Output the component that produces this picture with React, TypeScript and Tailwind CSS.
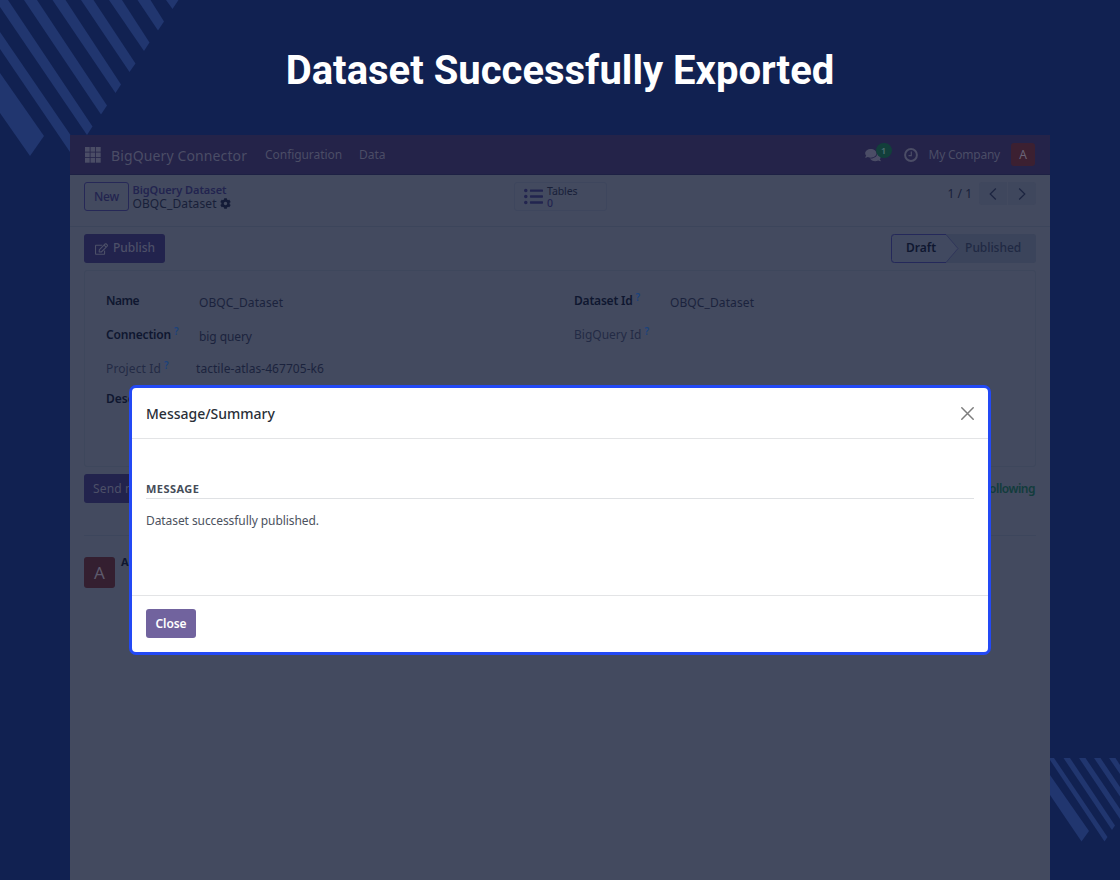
import type { ReactNode } from "react";
import { FaCog, FaComments, FaListUl, FaRegEdit } from "react-icons/fa";

function Stripes() {
  return (
    <svg className="pointer-events-none absolute inset-0 h-[880px] w-[1120px]" viewBox="0 0 1120 880" fill="#21366f">
      <path d="M0 73 44 136 30 156 0 113Z" />
      <path d="M0 32 76 143 70 152 0 49Z" />
      <path d="M0 0H8L92.5 126.5 87 135 0 7Z" />
      <path d="M24 0H37L107 105.5 101 114.5Z" />
      <path d="M52.5 0H65.5L121 84.5 115.5 93Z" />
      <path d="M81 0H93.5L135.5 63.5 129.5 72Z" />
      <path d="M109 0H122L149.5 42.5 144 51Z" />
      <path d="M137.5 0H150.5L164 21.5 158 30.5Z" />
      <path d="M166 0H178.5L172.5 9Z" />
      <path d="M1050 775 1089 831 1081.5 841.5 1050 795Z" />
      <path d="M1050 758H1054L1107.5 837 1104.5 841.5 1050 760Z" />
      <path d="M1063.5 758H1070L1115 825.5 1112 830Z" />
      <path d="M1079 758H1085.5L1120 809V819Z" />
      <path d="M1094 758H1100.5L1120 787V796.5Z" />
      <path d="M1109 758H1115.5L1120 765V774Z" />
    </svg>
  );
}

function AppsIcon() {
  return (
    <svg className="h-4 w-4" viewBox="0 0 16 16" fill="currentColor">
      {[0, 5.5, 11].map((y) => [0, 5.5, 11].map((x) => <rect key={`${x}-${y}`} x={x} y={y} width="4.7" height="4.7" />))}
    </svg>
  );
}

function ClockIcon() {
  return (
    <svg className="h-[14px] w-[14px]" viewBox="0 0 14 14" fill="none" stroke="currentColor">
      <circle cx="7" cy="7" r="5.9" strokeWidth="2" />
      <path d="M7.3 3.5V7.7H4.5" strokeWidth="1.2" />
    </svg>
  );
}

function Chevron({ d }: { d: string }) {
  return (
    <svg className="h-3 w-2" viewBox="0 0 8 12" fill="none" stroke="currentColor" strokeWidth="1.2">
      <path d={d} />
    </svg>
  );
}

function Label({ children, help, muted }: { children: ReactNode; help?: boolean; muted?: boolean }) {
  return (
    <div className={muted ? "flex text-[#232b45]" : "flex font-semibold text-[#0f1730]"}>
      {children}
      {help && <span className="-mt-[3px] ml-[3px] text-[10px] font-semibold leading-[16px] text-[#1b427c]">?</span>}
    </div>
  );
}

function NavBar() {
  return (
    <nav className="flex h-10 items-center border-b border-[#1d2044] bg-[#242349] pl-[15px] pr-[15px] text-[#4b4d66]">
      <AppsIcon />
      <span className="ml-[10px] pt-px text-[14px] tracking-[0.12px]">BigQuery Connector</span>
      <span className="ml-[18px] pt-px tracking-[-0.07px]">Configuration</span>
      <span className="ml-[17px] pt-px">Data</span>
      <div className="relative ml-auto mr-[16px] h-4 w-[23px]">
        <FaComments className="mt-px h-[14px] w-4" />
        <span className="absolute -top-[4px] left-[11px] flex h-[15px] w-4 items-center justify-center rounded-full bg-[#123f3b] text-[9px] font-semibold leading-none text-[#4f6f73]">1</span>
      </div>
      <ClockIcon />
      <span className="ml-[11px] pt-px tracking-[-0.24px]">My Company</span>
      <span className="ml-[11px] flex h-[23px] w-6 items-center justify-center rounded-[3px] bg-[#3c2031] text-[12px] text-[#6a6477]">A</span>
    </nav>
  );
}

function ControlPanel() {
  return (
    <div className="flex h-[52px] items-start border-b border-[#3c455b] px-[14px] pt-[7px]">
      <div className="flex h-[29px] w-[45px] items-center justify-center rounded-[3px] border border-[#262857] font-medium tracking-[-0.2px] text-[#22244f]">New</div>
      <div className="ml-[3.5px] flex w-[283px] flex-col pt-[0.5px] leading-[14px]">
        <span className="text-[11px] font-semibold tracking-[-0.05px] text-[#22244f]">BigQuery Dataset</span>
        <span className="flex items-center text-[#182039]">
          <span className="tracking-[0.1px]">OBQC_Dataset</span>
          <FaCog className="ml-[3px] h-[11px] w-[11px] text-[#131b37]" />
        </span>
      </div>
      <div className="ml-[98.5px] flex h-[29px] w-[93px] items-center rounded-[3px] border border-[#3e465d] pl-[9px]">
        <FaListUl className="h-[19px] w-[19px] text-[#22244f]" />
        <div className="ml-[4px] flex flex-col text-[10.5px] leading-[12px]">
          <span className="tracking-[-0.08px] text-[#182039]">Tables</span>
          <span className="font-medium text-[#22244f]">0</span>
        </div>
      </div>
      <div className="ml-auto flex h-[23px] items-center">
        <span className="mr-[7px] pt-px text-[#182039]">1 / 1</span>
        <div className="flex gap-px text-[#1c2440]">
          <span className="flex h-[23px] w-[28px] items-center justify-center rounded-l-[3px] bg-[#3f475d]"><Chevron d="M6.8 .5 1.2 6 6.8 11.5" /></span>
          <span className="flex h-[23px] w-[28px] items-center justify-center rounded-r-[3px] bg-[#3f475d]"><Chevron d="M1.2 .5 6.8 6 1.2 11.5" /></span>
        </div>
      </div>
    </div>
  );
}

function StatusBar() {
  return (
    <div className="flex h-[43px] items-start justify-between px-[14px] pt-[7px]">
      <div className="flex h-[29px] w-[81px] items-center rounded-[3px] bg-[#22234d] pl-[11px] text-[#4d5068]">
        <FaRegEdit className="h-[12px] w-[13px]" />
        <span className="-mt-px ml-[5px] font-medium">Publish</span>
      </div>
      <div className="relative flex h-[29px] w-[145px] items-center rounded-[3px] bg-[#3b445b]">
        <svg className="absolute inset-0 h-[29px] w-[145px]" viewBox="0 0 145 29">
          <path d="M3.5 .5H55L67 14.5 55 28.5H3.5a3 3 0 0 1-3-3V3.5a3 3 0 0 1 3-3Z" fill="#414960" />
          <path d="M55 .5 67 14.5 55 28.5" fill="none" stroke="#30365a" />
          <path d="M55 .5H3.500a3 3 0 0 0-3 3V25.5a3 3 0 0 0 3 3H55" fill="none" stroke="#24285a" />
        </svg>
        <span className="relative -mt-px ml-[15px] font-semibold text-[#0f1730]">Draft</span>
        <span className="relative -mt-px ml-[29px] font-medium tracking-[-0.05px] text-[#202943]">Published</span>
      </div>
    </div>
  );
}

function RecordSheet() {
  return (
    <div className="mx-[14px] flex h-[197px] rounded-[3px] border border-[#3e475c] pl-[21px] pt-[21px] text-[#1b233d]">
      <div className="grid w-[468px] grid-cols-[90px_1fr] grid-rows-[34px_34px_30px_20px] leading-[18px]">
        <Label><span className="tracking-[-0.55px]">Name</span></Label>
        <span className="pl-[3px] pt-[1.5px] tracking-[0.1px]">OBQC_Dataset</span>
        <Label help><span className="tracking-[-0.17px]">Connection</span></Label>
        <span className="pl-[3px] pt-[1.5px] tracking-[-0.08px]">big query</span>
        <Label help muted><span className="tracking-[0.12px]">Project Id</span></Label>
        <span className="tracking-[0.05px]">tactile-atlas-467705-k6</span>
        <Label>Description</Label>
      </div>
      <div className="grid grid-cols-[96px_1fr] grid-rows-[34px_34px] leading-[18px]">
        <Label help><span className="tracking-[-0.2px]">Dataset Id</span></Label>
        <span className="pt-[1.5px] tracking-[0.1px]">OBQC_Dataset</span>
        <Label help muted>BigQuery Id</Label>
      </div>
    </div>
  );
}

function Chatter() {
  return (
    <div className="mx-[14px] flex flex-col pt-[7px]">
      <div className="flex h-[62px] items-start justify-between border-b border-[#3d465c]">
        <div className="flex h-[29px] w-[60px] items-center whitespace-nowrap rounded-[3px] bg-[#22234d] px-[9px] tracking-[0.15px] text-[#4d5068]">Send m</div>
        <span className="flex h-[29px] items-center pr-[1px] font-semibold tracking-[-0.5px] text-[#123c3c]">Following</span>
      </div>
      <div className="flex pt-[21px]">
        <span className="flex h-[31px] w-[31px] items-center justify-center rounded-[3px] bg-[#341f30] text-[17px] text-[#5d5a6c]">A</span>
        <span className="-mt-[3px] ml-[6px] text-[11px] font-bold text-[#0f1730]">A</span>
      </div>
    </div>
  );
}

function MessageDialog() {
  return (
    <div role="dialog" className="absolute left-[59px] top-[250px] flex h-[270px] w-[862px] flex-col rounded-[7px] border-[3px] border-[#2349f5] bg-white">
      <header className="flex h-[51px] items-center justify-between border-b border-[#e3e4e6] px-[14px]">
        <h2 className="text-[14px] font-medium text-[#2a2f38]">Message/Summary</h2>
        <svg className="h-[13px] w-[13px]" viewBox="0 0 13 13" stroke="#7d7d7d" strokeWidth="1.5" strokeLinecap="round">
          <path d="M.8 .8 12.2 12.2M12.2 .8 .8 12.2" />
        </svg>
      </header>
      <div className="flex flex-1 flex-col px-[14px] pt-[42px]">
        <h3 className="h-[18px] border-b border-[#dfe1e4] text-[11px] font-bold leading-[16px] tracking-[0.45px] text-[#454c58]">MESSAGE</h3>
        <p className="mt-[13px] leading-[18px] tracking-[-0.08px] text-[#4c525e]">Dataset successfully published.</p>
      </div>
      <footer className="flex h-[57px] items-start border-t border-[#e3e4e6] pl-[14px] pt-[13px]">
        <button className="h-[29px] w-[50px] rounded-[3px] bg-[#71639e] font-semibold tracking-[-0.1px] text-white">Close</button>
      </footer>
    </div>
  );
}

export default function App() {
  return (
    <main className="relative flex h-[880px] w-[1120px] flex-col overflow-hidden bg-[#112151]">
      <Stripes />
      <h1 className="relative flex h-[135px] items-start justify-center pt-[47px] font-['Roboto',sans-serif] text-[40px] font-bold leading-[48px] text-white">Dataset Successfully Exported</h1>
      <section className="relative mx-[70px] flex flex-1 flex-col bg-[#434a5f] font-['Noto_Sans',sans-serif] text-[12px]">
        <NavBar />
        <ControlPanel />
        <StatusBar />
        <RecordSheet />
        <Chatter />
        <MessageDialog />
      </section>
    </main>
  );
}
